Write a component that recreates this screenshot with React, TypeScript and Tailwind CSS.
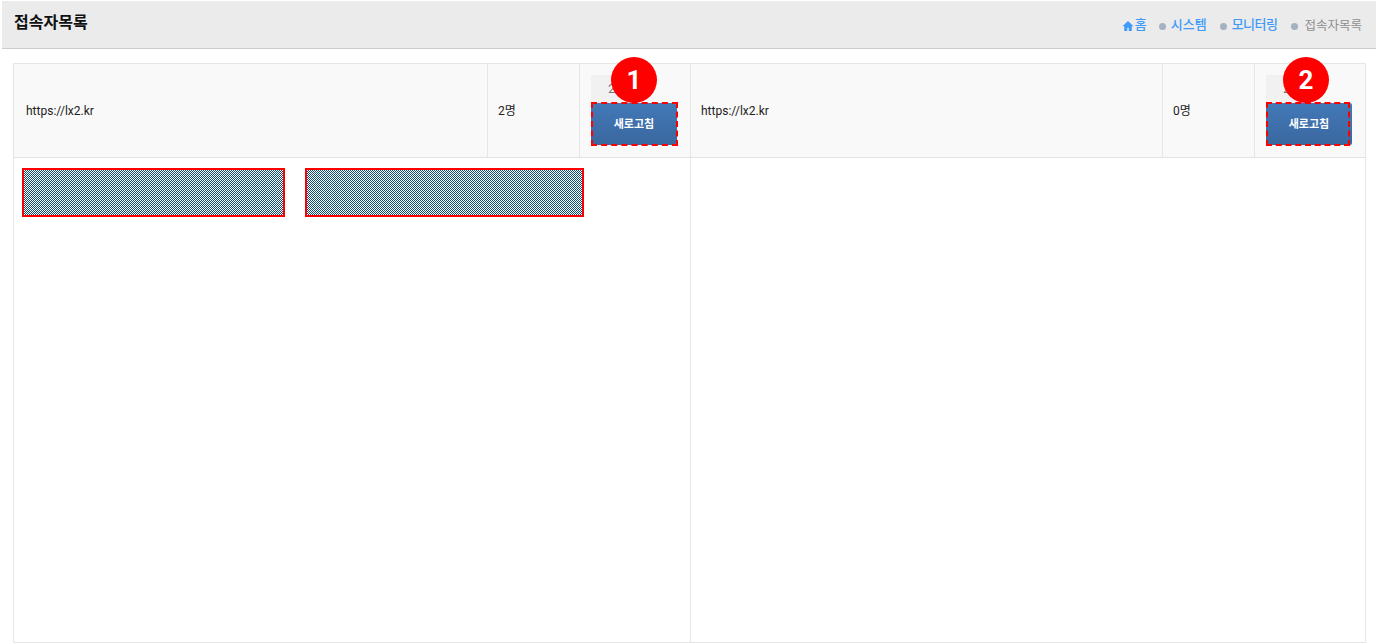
import React from 'react';

const FONT = "font-['Roboto','Noto_Sans_CJK_KR',sans-serif]";

type PanelProps = {
    url: string;
    urlClass: string;
    count: string;
    badge: string;
    badgeClass: string;
    dashClass: string;
    last?: boolean;
    children?: React.ReactNode;
};

const Dot = ({ gap }: { gap: string }) => <span className={`${gap} mt-[3px] inline-block h-[7px] w-[7px] rounded-full bg-[#a3b1c2]`} />;

const Crumbs = () => (
    <div className="flex items-center text-[13px] font-medium text-[#3f9bf7]">
        <svg className="mr-[1px] mt-[3px] h-[12px] w-[12px] fill-[#3f9bf7]" viewBox="0 0 24 24">
            <path d="M12 2L1 12.5h3.5V22h6v-6.5h3V22h6v-9.5H23z" />
        </svg>
        <span className="mr-[12px]">홈</span>
        <Dot gap="mr-[5px]" />
        <span className="mr-[13px]">시스템</span>
        <Dot gap="mr-[5px]" />
        <span className="mr-[14px] tracking-[-0.5px]">모니터링</span>
        <Dot gap="mr-[6px]" />
        <span className="mt-[3px] text-[12.5px] font-normal text-[#8f8f8f]">접속자목록</span>
    </div>
);

const Panel: React.FC<PanelProps> = ({ url, urlClass, count, badge, badgeClass, dashClass, last, children }) => (
    <div className={last ? 'flex min-w-0 flex-col' : 'flex min-w-0 flex-col border-r border-[#e6e6e6]'}>
        <div className="flex h-[94px] border-b border-[#e2e2e2] bg-[#f9f9f9] text-[12px] text-[#222]">
            <div className={urlClass}>{url}</div>
            <div className="flex w-[92px] items-center border-r border-[#e6e6e6] pl-[10px]">{count}</div>
            <div className="relative w-[110px] pl-[11px] pt-[11px]">
                <div className="flex h-[28px] w-[40px] items-center bg-[#f1f1f1] pl-[17px] text-[13px] text-[#777]">20</div>
                <button className="h-[42px] w-[86px] rounded-[2px] bg-gradient-to-b from-[#4279b8] to-[#3a679f] pt-[2px] text-[11px] font-bold text-white">
                    새로고침
                </button>
                <div className={dashClass} />
                <div className={badgeClass}>{badge}</div>
            </div>
        </div>
        <div className="flex flex-1 gap-[20px] px-[8px] pt-[10px]">{children}</div>
    </div>
);

const Masked = ({ width }: { width: string }) => (
    <div className={`${width} h-[49px] border-2 border-[#f00] bg-[repeating-conic-gradient(#0b4f75_0_25%,#ffffff_0_50%)] bg-size-[2px_2px]`} />
);

export default function App() {
    return (
        <div className={`${FONT} flex h-[644px] flex-col overflow-hidden bg-white`}>
            <header className="ml-[2px] mt-[1px] flex h-[48px] shrink-0 items-start justify-between border-b border-[#cccccc] bg-[#ebebeb] pl-[12px] pr-[14px] pt-[11px]">
                <h1 className="text-[16px] font-bold leading-[22px] text-[#111]">접속자목록</h1>
                <div className="pt-[2px]">
                    <Crumbs />
                </div>
            </header>
            <main className="flex-1 pb-[1px] pl-[13px] pr-[10px] pt-[14px]">
                <div className="grid h-full grid-cols-[677px_1fr] border border-[#e6e6e6]">
                    <Panel
                        url="https://lx2.kr"
                        urlClass="flex flex-1 items-center border-r border-[#e6e6e6] pl-[12px]"
                        count="2명"
                        badge="1"
                        badgeClass="absolute left-[31px] top-[-7px] flex h-[46px] w-[46px] items-center justify-center rounded-full bg-[#f00] text-[26px] font-bold text-white"
                        dashClass="absolute left-[11px] top-[38px] h-[44px] w-[87px] border-2 border-dashed border-[#f00]"
                    >
                        <Masked width="w-[263px]" />
                        <Masked width="w-[279px]" />
                    </Panel>
                    <Panel
                        url="https://lx2.kr"
                        urlClass="flex flex-1 items-center border-r border-[#e6e6e6] pl-[10px]"
                        count="0명"
                        badge="2"
                        badgeClass="absolute left-[28px] top-[-7px] flex h-[46px] w-[46px] items-center justify-center rounded-full bg-[#f00] text-[26px] font-bold text-white"
                        dashClass="absolute left-[11px] top-[38px] h-[44px] w-[84px] border-2 border-dashed border-[#f00]"
                        last
                    />
                </div>
            </main>
        </div>
    );
}
